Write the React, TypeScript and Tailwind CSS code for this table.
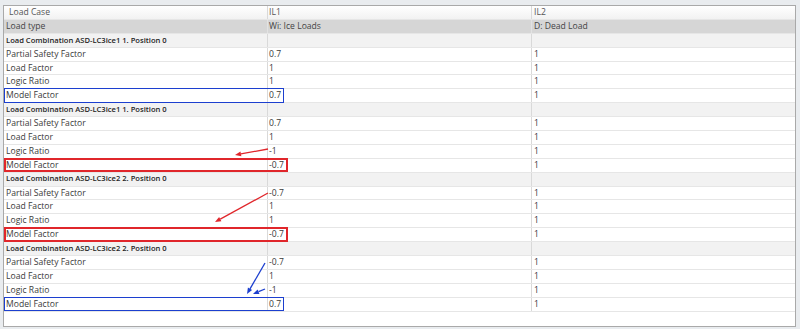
import React from 'react';

type Mark = 'blue' | 'red';

interface Group {
  title: string;
  rows: [string, string, string][];
  mark: Mark;
}

const groups: Group[] = [
  {
    title: 'Load Combination ASD-LC3ice1 1. Position 0',
    rows: [
      ['Partial Safety Factor', '0.7', '1'],
      ['Load Factor', '1', '1'],
      ['Logic Ratio', '1', '1'],
      ['Model Factor', '0.7', '1'],
    ],
    mark: 'blue',
  },
  {
    title: 'Load Combination ASD-LC3ice1 1. Position 0',
    rows: [
      ['Partial Safety Factor', '0.7', '1'],
      ['Load Factor', '1', '1'],
      ['Logic Ratio', '-1', '1'],
      ['Model Factor', '-0.7', '1'],
    ],
    mark: 'red',
  },
  {
    title: 'Load Combination ASD-LC3ice2 2. Position 0',
    rows: [
      ['Partial Safety Factor', '-0.7', '1'],
      ['Load Factor', '1', '1'],
      ['Logic Ratio', '1', '1'],
      ['Model Factor', '-0.7', '1'],
    ],
    mark: 'red',
  },
  {
    title: 'Load Combination ASD-LC3ice2 2. Position 0',
    rows: [
      ['Partial Safety Factor', '-0.7', '1'],
      ['Load Factor', '1', '1'],
      ['Logic Ratio', '-1', '1'],
      ['Model Factor', '0.7', '1'],
    ],
    mark: 'blue',
  },
];

const rowCls = 'grid grid-cols-[264px_264px_1fr] h-[13.9px] border-b border-[#e6e6e6]';
const cellCls = 'flex items-center border-r border-[#d9d9d9] overflow-hidden whitespace-nowrap';

function Arrow({ x1, y1, x2, y2, color }: { x1: number; y1: number; x2: number; y2: number; color: string }) {
  // arrow head as a small filled triangle at (x2, y2)
  const a = Math.atan2(y2 - y1, x2 - x1);
  const len = 6;
  const w = 2.4;
  const bx = x2 - len * Math.cos(a);
  const by = y2 - len * Math.sin(a);
  const px = -Math.sin(a) * w;
  const py = Math.cos(a) * w;
  return (
    <g>
      <line x1={x1} y1={y1} x2={bx} y2={by} stroke={color} strokeWidth={1.3} />
      <polygon points={`${x2},${y2} ${bx + px},${by + py} ${bx - px},${by - py}`} fill={color} />
    </g>
  );
}

export default function App() {
  return (
    <div
      className="relative w-[800px] h-[329px] bg-[#e9ecef] pt-[5px] pl-[3px] pr-[4px] pb-[2px] text-[8.6px] text-[#3a3a3a]"
      style={{ fontFamily: '"Open Sans", "Noto Sans", sans-serif' }}
    >
      <div className="h-full bg-white border border-[#a9a9a9] overflow-hidden">
        {/* column captions */}
        <div className={`${rowCls} bg-gradient-to-b from-white to-[#f2f2f2] text-[#555]`}>
          <div className={`${cellCls} pl-[5px]`}>Load Case</div>
          <div className={`${cellCls} pl-[1px]`}>IL1</div>
          <div className={`${cellCls} pl-[2px] border-r-0`}>IL2</div>
        </div>
        <div className={`${rowCls} bg-[#d6d6d6] text-[#444]`}>
          <div className={`${cellCls} pl-[2px] border-[#e2e2e2]`}>Load type</div>
          <div className={`${cellCls} pl-[1px] border-[#e2e2e2]`}>Wi: Ice Loads</div>
          <div className={`${cellCls} pl-[2px] border-r-0`}>D: Dead Load</div>
        </div>

        {groups.map((g, gi) => (
          <div key={gi}>
            <div className={`${rowCls} bg-[#f2f2f2]`}>
              <div className={`${cellCls} pl-[2px] font-semibold text-[7.6px] text-[#1e1e1e]`}>{g.title}</div>
              <div className={cellCls}></div>
              <div className={`${cellCls} border-r-0`}></div>
            </div>
            {g.rows.map((r, ri) => (
              <div key={ri} className={`${rowCls} relative`}>
                <div className={`${cellCls} pl-[2px]`}>{r[0]}</div>
                <div className={`${cellCls} pl-[1px]`}>{r[1]}</div>
                <div className={`${cellCls} pl-[2px] border-r-0`}>{r[2]}</div>
                {ri === 3 && g.mark === 'blue' && (
                  <div className="absolute left-0 top-[-1px] w-[280px] h-[14.6px] border-[1.5px] border-[#1c3fcf]" />
                )}
                {ri === 3 && g.mark === 'red' && (
                  <div className="absolute left-0 top-[-1px] w-[284px] h-[14.6px] border-2 border-[#e0262b]" />
                )}
              </div>
            ))}
          </div>
        ))}
      </div>

      {/* annotation arrows */}
      <svg className="absolute inset-0 pointer-events-none" width={800} height={329}>
        <Arrow x1={268} y1={149} x2={235} y2={155} color="#e0262b" />
        <Arrow x1={268} y1={193} x2={215} y2={222} color="#e0262b" />
        <Arrow x1={265} y1={263} x2={247} y2={294} color="#1c3fcf" />
        <Arrow x1={265} y1={289} x2={253} y2={294} color="#1c3fcf" />
      </svg>
    </div>
  );
}
